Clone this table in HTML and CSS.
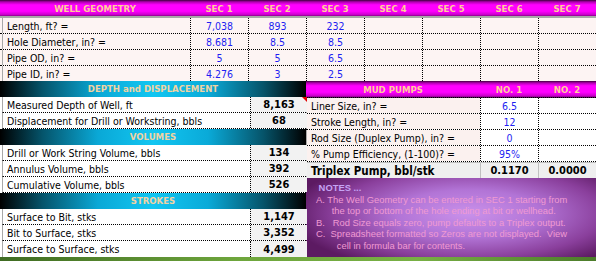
FILE: index.html
```html
<!DOCTYPE html>
<html lang="en">
<head>
<meta charset="UTF-8">
<title>Well Geometry</title>
<link rel="stylesheet" href="styles.css">
</head>
<body>
<div class="sheet">

  <!-- section table for the hole -->
  <div class="geo">
    <div class="geo-row head">
      <div class="cell label">WELL GEOMETRY</div>
      <div class="cell">SEC 1</div>
      <div class="cell">SEC 2</div>
      <div class="cell">SEC 3</div>
      <div class="cell">SEC 4</div>
      <div class="cell">SEC 5</div>
      <div class="cell">SEC 6</div>
      <div class="cell">SEC 7</div>
    </div>
    <div class="geo-row">
      <div class="cell label">Length, ft? =</div>
      <div class="cell num">7,038</div>
      <div class="cell num">893</div>
      <div class="cell num">232</div>
      <div class="cell"></div><div class="cell"></div><div class="cell"></div><div class="cell"></div>
    </div>
    <div class="geo-row">
      <div class="cell label">Hole Diameter, in? =</div>
      <div class="cell num">8.681</div>
      <div class="cell num">8.5</div>
      <div class="cell num">8.5</div>
      <div class="cell"></div><div class="cell"></div><div class="cell"></div><div class="cell"></div>
    </div>
    <div class="geo-row">
      <div class="cell label">Pipe OD, in? =</div>
      <div class="cell num">5</div>
      <div class="cell num">5</div>
      <div class="cell num">6.5</div>
      <div class="cell"></div><div class="cell"></div><div class="cell"></div><div class="cell"></div>
    </div>
    <div class="geo-row">
      <div class="cell label">Pipe ID, in? =</div>
      <div class="cell num">4.276</div>
      <div class="cell num">3</div>
      <div class="cell num">2.5</div>
      <div class="cell"></div><div class="cell"></div><div class="cell"></div><div class="cell"></div>
    </div>
  </div>

  <div class="lower">
    <!-- depth, volumes and strokes -->
    <div class="calc">
      <div class="band">DEPTH and DISPLACEMENT</div>
      <div class="calc-row">
        <div class="cell label">Measured Depth of Well, ft</div>
        <div class="cell total flagged">8,163</div>
      </div>
      <div class="calc-row">
        <div class="cell label">Displacement for Drill or Workstring, bbls</div>
        <div class="cell total">68</div>
      </div>
      <div class="band">VOLUMES</div>
      <div class="calc-row">
        <div class="cell label">Drill or Work String Volume, bbls</div>
        <div class="cell total">134</div>
      </div>
      <div class="calc-row">
        <div class="cell label">Annulus Volume, bbls</div>
        <div class="cell total">392</div>
      </div>
      <div class="calc-row">
        <div class="cell label">Cumulative Volume, bbls</div>
        <div class="cell total">526</div>
      </div>
      <div class="band">STROKES</div>
      <div class="calc-row">
        <div class="cell label">Surface to Bit, stks</div>
        <div class="cell total">1,147</div>
      </div>
      <div class="calc-row">
        <div class="cell label">Bit to Surface, stks</div>
        <div class="cell total">3,352</div>
      </div>
      <div class="calc-row">
        <div class="cell label">Surface to Surface, stks</div>
        <div class="cell total">4,499</div>
      </div>
    </div>

    <!-- pump output and notes -->
    <div class="pumps">
      <div class="pump-row head">
        <div class="cell label">MUD PUMPS</div>
        <div class="cell">NO. 1</div>
        <div class="cell">NO. 2</div>
      </div>
      <div class="pump-row">
        <div class="cell label">Liner Size, in? =</div>
        <div class="cell num">6.5</div>
        <div class="cell"></div>
      </div>
      <div class="pump-row">
        <div class="cell label">Stroke Length, in? =</div>
        <div class="cell num">12</div>
        <div class="cell"></div>
      </div>
      <div class="pump-row">
        <div class="cell label">Rod Size (Duplex Pump), in? =</div>
        <div class="cell num">0</div>
        <div class="cell"></div>
      </div>
      <div class="pump-row">
        <div class="cell label">% Pump Efficiency, (1-100)? =</div>
        <div class="cell num">95%</div>
        <div class="cell"></div>
      </div>
      <div class="pump-row result">
        <div class="cell label">Triplex Pump, bbl/stk</div>
        <div class="cell">0.1170</div>
        <div class="cell">0.0000</div>
      </div>
      <div class="notes"><div class="notes-title"> NOTES ...</div><div>A. The Well Geometry can be entered in SEC 1 starting from</div><div>      the top or bottom of the hole ending at bit or wellhead.</div><div>B.   Rod Size equals zero, pump defaults to a Triplex output.</div><div>C.  Spreadsheet formatted so Zeros are not displayed.  View</div><div>        cell in formula bar for contents.</div></div>
    </div>
  </div>

  <div class="ground"></div>
</div>
</body>
</html>
```

FILE: styles.css
```css
body {
  margin: 0;
  font-family: "DejaVu Sans Condensed", "DejaVu Sans", sans-serif;
  font-size: 10.5px;
  color: #000;
  background: #fff;
}
.sheet {
  width: 596px;
  height: 261px;
  overflow: hidden;
  display: flex;
  flex-direction: column;
}
.cell {
  display: flex;
  align-items: center;
  justify-content: center;
  white-space: nowrap;
  overflow: hidden;
}
.cell.label {
  justify-content: flex-start;
  padding-left: 4px;
}
.num {
  color: #1f1ff2;
}

/* magenta title bars */
.head,
.geo-row.head {
  background: linear-gradient(to bottom, #3c003c 0, #b000b0 12%, #ff00ff 30%, #ff00ff 70%, #d000d0 90%, #8a008a 100%);
  color: #ffcc99;
  font-weight: bold;
  font-size: 9.5px;
  border-bottom: 2px solid #a8a8a8;
}
.head .cell.label {
  justify-content: center;
  padding-left: 0;
}

/* well geometry */
.geo-row {
  display: grid;
  grid-template-columns: 190px repeat(7, 58px);
  height: 16px;
  box-sizing: border-box;
  background: #fdf4f3;
  border-bottom: 1px dotted #000;
}
.geo-row.head {
  height: 18px;
}
.geo-row:last-child {
  height: 15px;
  border-bottom: none;
}
.geo-row:not(.head) .cell + .cell {
  border-left: 1px dotted #000;
}
.geo-row:not(.head) .label {
  margin-left: 2px;
  border-left: 1px solid #a8a8a8;
}

.lower {
  display: flex;
  flex: 1;
}

/* cyan bands and result rows on the left */
.calc {
  width: 306px;
  display: flex;
  flex-direction: column;
}
.band {
  height: 16px;
  line-height: 16px;
  text-align: center;
  font-weight: bold;
  font-size: 9.5px;
  color: #f2d3a2;
  background: linear-gradient(to right, #000 0%, #05556c 14%, #0aa8d6 32%, #12c6f2 50%, #0aaad8 68%, #06546a 86%, #000 100%);
}
.calc-row {
  display: grid;
  grid-template-columns: 247px 57px;
  height: 16px;
  box-sizing: border-box;
  margin-left: 2px;
  border-left: 1px solid #a8a8a8;
  border-bottom: 1px dotted #000;
}
.calc-row .label {
  background: #fff;
}
.total {
  position: relative;
  font-weight: bold;
  font-size: 11px;
  background: #f2f2f2;
  border-left: 1px dotted #000;
}
.calc-row:last-child {
  border-bottom: none;
}
/* comment marker in the corner of a cell */
.flagged::after {
  content: "";
  position: absolute;
  top: 0;
  right: 0;
  border-top: 5px solid #e00000;
  border-left: 5px solid transparent;
}

/* mud pumps */
.pumps {
  flex: 1;
  display: flex;
  flex-direction: column;
}
.pump-row {
  display: grid;
  grid-template-columns: 174px 58px 58px;
  height: 16px;
  box-sizing: border-box;
  border-bottom: 1px dotted #000;
}
.pump-row.head {
  height: 17px;
}
.pump-row:not(.head) .label {
  background: #fbf1ef;
  border-left: 1px solid #a8a8a8;
}
.pump-row:not(.head) .cell + .cell {
  background: #fff;
  border-left: 1px dotted #000;
}
.pump-row.result {
  border-top: 1px solid #c0c0c0;
  border-bottom: none;
  font-weight: bold;
  font-size: 11px;
}
.pump-row.result .cell,
.pump-row.result .cell + .cell {
  background: #efefef;
  border-left: 1px solid #c0c0c0;
}
.pump-row.result .label {
  font-size: 11.5px;
}

.notes {
  flex: 1;
  padding: 4px 0 0 10px;
  white-space: pre;
  font-family: "Liberation Sans", Arial, sans-serif;
  font-size: 9.4px;
  line-height: 11.5px;
  color: #f09ad2;
  background: radial-gradient(ellipse 62% 75% at 56% 45%, #c991ea 0%, #b274d6 40%, #8a3f9c 75%, #5c1a62 100%);
}
.notes-title {
  color: #c6a4f4;
  font-weight: bold;
}

.ground {
  height: 4px;
  background: linear-gradient(to right, #3f6b22, #6ea63c 40%, #78b044 70%, #4c7c2a);
}
```
